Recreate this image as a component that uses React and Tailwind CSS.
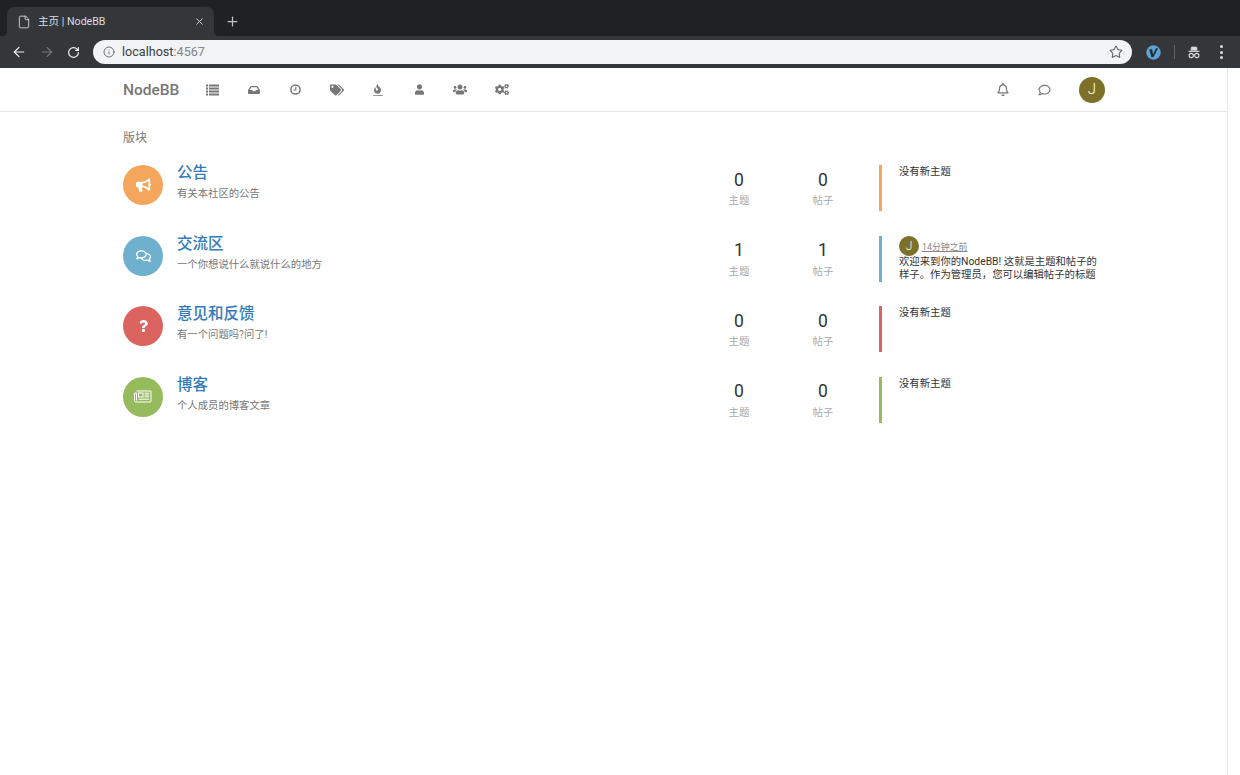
import React from "react";
import { ArrowLeft, ArrowRight, RotateCw, Info, Star, X, Plus, File } from "lucide-react";
import {
  FaInbox, FaTags, FaFire, FaUser, FaUsers, FaCogs,
  FaRegBell, FaRegComment, FaBullhorn, FaRegComments, FaQuestion,
} from "react-icons/fa";

const FONT = "font-['Roboto','Noto_Sans_CJK_SC',sans-serif]";

const ListIcon = (
  <svg width="13" height="12" viewBox="0 0 13 12" fill="currentColor">
    <rect x="0" y="0.5" width="2" height="2" />
    <rect x="3" y="0.5" width="10" height="2" />
    <rect x="0" y="3.5" width="2" height="2" />
    <rect x="3" y="3.5" width="10" height="2" />
    <rect x="0" y="6.5" width="2" height="2" />
    <rect x="3" y="6.5" width="10" height="2" />
    <rect x="0" y="9.5" width="2" height="2" />
    <rect x="3" y="9.5" width="10" height="2" />
  </svg>
);

const ClockIcon = (
  <svg width="11" height="11" viewBox="0 0 11 11" fill="none" stroke="currentColor">
    <circle cx="5.5" cy="5.5" r="4.6" strokeWidth="1.5" />
    <path d="M5.8 2.8V6H3.6" strokeWidth="1.1" />
  </svg>
);

const NewspaperIcon = (
  <svg width="18" height="13" viewBox="0 0 18 13" fill="none" stroke="currentColor" strokeWidth="1">
    <path d="M2.5 1H17V11C17 11.6 16.6 12 16 12H2C1.2 12 .5 11.4 .5 10.5V3H2.5V10.5" />
    <rect x="4.5" y="3" width="4.5" height="4" />
    <path d="M10.5 3.2H15M10.5 5H15M10.5 6.8H15M4.5 9.2H15" />
  </svg>
);

const navIcons = [
  ListIcon,
  <FaInbox className="w-[12px] h-[12px]" />,
  ClockIcon,
  <FaTags className="w-[14px] h-[14px]" />,
  <span className="flex flex-col items-center">
    <FaFire className="w-[7px] h-[10px]" />
    <span className="block w-[10px] h-px bg-[#999] mt-[1px]" />
  </span>,
  <FaUser className="w-[9px] h-[11px]" />,
  <FaUsers className="w-[14px] h-[13px]" />,
  <FaCogs className="w-[14px] h-[13px]" />,
];

const categories = [
  { title: "公告", desc: "有关本社区的公告", color: "bg-[#f4a65c]", icon: <FaBullhorn className="w-[15px] h-[14px]" />, n: 0 },
  { title: "交流区", desc: "一个你想说什么就说什么的地方", color: "bg-[#6eb0ce]", icon: <FaRegComments className="w-[15px] h-[14px]" />, n: 1 },
  { title: "意见和反馈", desc: "有一个问题吗?问了!", color: "bg-[#dc6460]", icon: <FaQuestion className="w-[9px] h-[12px]" />, n: 0 },
  { title: "博客", desc: "个人成员的博客文章", color: "bg-[#95bb5c]", icon: NewspaperIcon, n: 0 },
];

function Stat({ value, label }) {
  return (
    <div className="w-[84px] flex flex-col items-center pt-[4.5px]">
      <div className="text-[17.5px] leading-[20px] text-[#333]">{value}</div>
      <div className="text-[10.4px] leading-[14px] mt-[4.5px] text-[#aaa]">{label}</div>
    </div>
  );
}

function Row({ c }) {
  return (
    <div className="flex h-[70.67px]">
      <div className={`w-[40px] h-[40px] rounded-full ${c.color} text-white flex items-center justify-center shrink-0`}>{c.icon}</div>
      <div className="ml-[14px] flex-1 min-w-0">
        <div className="text-[15.5px] leading-[16px] text-[#337ab7] font-medium">{c.title}</div>
        <div className="text-[10.35px] leading-[14px] text-[#777] mt-[6px]">{c.desc}</div>
      </div>
      <Stat value={c.n} label="主题" />
      <Stat value={c.n} label="帖子" />
      <div className={`ml-[14px] w-[3px] h-[46px] ${c.color} shrink-0`} />
      <div className="ml-[17px] w-[206px] shrink-0 text-[10.35px] leading-[12.8px] text-[#333]">
        {c.n ? (
          <>
            <div className="flex items-center h-[20px] mt-[0.5px]">
              <span className="w-[20px] h-[20px] rounded-full bg-[#7d7028] text-white text-[12px] font-light flex items-center justify-center">J</span>
              <span className="ml-[3px] mt-[3px] text-[8.9px] leading-[11px] underline text-[#888]">14分钟之前</span>
            </div>
            <div>欢迎来到你的NodeBB! 这就是主题和帖子的<br />样子。作为管理员{"\uFF0C"}您可以编辑帖子的标题</div>
          </>
        ) : (
          <div className="pt-[1px]">没有新主题</div>
        )}
      </div>
    </div>
  );
}

export default function App() {
  return (
    <div className={`${FONT} h-[775px] w-[1240px] overflow-hidden flex flex-col bg-white`}>
      {/* tab strip */}
      <div className="h-[36px] bg-[#202124] flex items-end pl-[7px] shrink-0">
        <div className="relative w-[207px] h-[29px] bg-[#35363a] rounded-t-[7px] flex items-center pl-[10px] pr-[9px] text-[#dadce0]">
          <File className="w-[14px] h-[14px]" strokeWidth={1.5} />
          <span className="ml-[7px] flex-1 text-[10.6px]">主页 | NodeBB</span>
          <X className="w-[11px] h-[11px]" strokeWidth={2} />
          <svg className="absolute right-[-5px] bottom-0" width="5" height="5" viewBox="0 0 5 5">
            <path d="M0 0C0 3 2 5 5 5H0Z" fill="#35363a" />
          </svg>
          <svg className="absolute left-[-5px] bottom-0" width="5" height="5" viewBox="0 0 5 5">
            <path d="M5 0C5 3 3 5 0 5H5Z" fill="#35363a" />
          </svg>
        </div>
        <Plus className="ml-[11px] mb-[7px] w-[15px] h-[15px] text-[#c4c7c9]" strokeWidth={2} />
      </div>
      {/* toolbar */}
      <div className="h-[32px] bg-[#35363a] flex items-center pl-[11px] pr-[12px] shrink-0">
        <ArrowLeft className="w-[16px] h-[16px] text-[#f1f3f4]" strokeWidth={1.8} />
        <ArrowRight className="ml-[12px] w-[16px] h-[16px] text-[#75777a]" strokeWidth={1.8} />
        <RotateCw className="ml-[12px] w-[13px] h-[13px] text-[#f1f3f4]" strokeWidth={2.2} />
        <div className="ml-[13px] h-[24px] w-[1039px] rounded-full bg-[#f1f3f4] flex items-center pl-[10px] pr-[9px]">
          <Info className="w-[12px] h-[12px] text-[#5f6368]" strokeWidth={1.8} />
          <span className="ml-[7px] text-[12.6px] text-[#3c4043]">localhost<span className="text-[#80868b]">:4567</span></span>
          <Star className="ml-auto w-[14px] h-[14px] text-[#5f6368]" strokeWidth={1.8} />
        </div>
        <svg className="ml-[14px]" width="15" height="15" viewBox="0 0 15 15">
          <circle cx="7.5" cy="7.5" r="7.2" fill="#5ea3d6" />
          <path d="M3.2 4.2H6.2L7 9.2L10 3.2H12.2L7.4 12.2H5.4Z" fill="#23303c" />
        </svg>
        <div className="ml-[13px] w-px h-[14px] bg-[#5f6368]" />
        <svg className="ml-[13px]" width="12" height="13" viewBox="0 0 12 13" fill="none" stroke="#dadce0">
          <path d="M2.8 4.2L3.5 1H8.5L9.2 4.2Z" fill="#dadce0" strokeWidth="0.6" />
          <path d="M0.5 5.4H11.5" strokeWidth="1.1" />
          <circle cx="3.2" cy="9.5" r="2.1" strokeWidth="1.1" />
          <circle cx="8.8" cy="9.5" r="2.1" strokeWidth="1.1" />
          <path d="M5.3 9.2H6.7" strokeWidth="0.9" />
        </svg>
        <div className="ml-[20px] flex flex-col gap-[2.5px]">
          <span className="w-[3px] h-[3px] rounded-full bg-[#dadce0]" />
          <span className="w-[3px] h-[3px] rounded-full bg-[#dadce0]" />
          <span className="w-[3px] h-[3px] rounded-full bg-[#dadce0]" />
        </div>
      </div>
      {/* page */}
      <div className="flex-1 flex min-h-0">
        <div className="flex-1 min-w-0 flex flex-col">
          <div className="h-[44px] border-b border-[#e7e7e7] pl-[123px] pr-[122px] flex items-center shrink-0">
            <span className="text-[15.5px] font-medium text-[#777] w-[69px] mt-[2px]">NodeBB</span>
            <div className="flex items-center">
              {navIcons.map((ic, i) => (
                <span key={i} className="w-[41.3px] flex items-center justify-center text-[#777]">{ic}</span>
              ))}
            </div>
            <div className="ml-auto flex items-center text-[#777]">
              <FaRegBell className="w-[12px] h-[13px]" />
              <FaRegComment className="ml-[29px] w-[13px] h-[12px]" />
              <span className="ml-[28px] w-[26px] h-[26px] rounded-full bg-[#7d7028] text-white text-[15px] font-light flex items-center justify-center">J</span>
            </div>
          </div>
          <div className="pl-[123px] pr-[122px] pt-[18px]">
            <div className="text-[12px] leading-[16px] text-[#777] mb-[19px]">版块</div>
            {categories.map((c) => <Row key={c.title} c={c} />)}
          </div>
        </div>
        <div className="w-[13px] bg-white border-l border-[#e8e8e8] shrink-0" />
      </div>
    </div>
  );
}
